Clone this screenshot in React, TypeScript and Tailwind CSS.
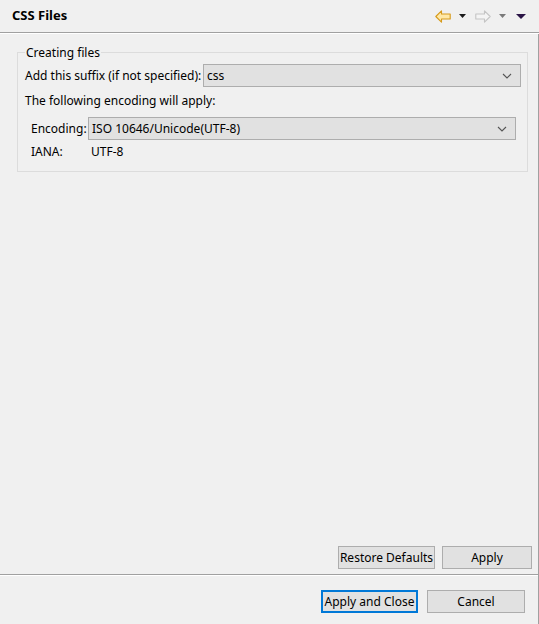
import React from "react";

const font = { fontFamily: '"Noto Sans", "Segoe UI", sans-serif' };

function Chevron() {
  return (
    <svg width="10" height="6" viewBox="0 0 10 6" className="shrink-0">
      <path d="M1 1 L5 5 L9 1" fill="none" stroke="#555" strokeWidth="1.1" />
    </svg>
  );
}

function Combo({ value, className }: { value: string; className: string }) {
  return (
    <div
      className={`flex h-[23px] items-center justify-between border border-[#adadad] bg-[#e1e1e1] pl-[3px] pr-[8px] ${className}`}
    >
      <span>{value}</span>
      <Chevron />
    </div>
  );
}

function Btn({ label, className }: { label: string; className: string }) {
  return (
    <button
      className={`flex h-[23px] items-center justify-center border border-[#adadad] bg-[#e1e1e1] text-[12px] text-black ${className}`}
    >
      {label}
    </button>
  );
}

function Tri({ color }: { color: string }) {
  return (
    <svg width="7" height="4" viewBox="0 0 7 4">
      <path d="M0 0 H7 L3.5 4 Z" fill={color} />
    </svg>
  );
}

function Arrow({ dir, stroke, fill }: { dir: "left" | "right"; stroke: string; fill: string }) {
  return (
    <svg width="16" height="13" viewBox="0 0 16 13" style={dir === "right" ? { transform: "scaleX(-1)" } : undefined}>
      <path
        d="M0.8 6.5 L6.5 0.8 V4 H15.2 V9 H6.5 V12.2 Z"
        fill={fill}
        stroke={stroke}
        strokeWidth="1.1"
        strokeLinejoin="round"
      />
    </svg>
  );
}

export default function App() {
  return (
    <div className="flex h-[624px] w-[539px] flex-col bg-[#f0f0f0] text-[12px] text-black" style={font}>
      {/* title bar */}
      <div className="flex h-[32px] shrink-0 items-center justify-between pl-[12px] pr-[13px]">
        <span className="text-[13px] font-bold">CSS Files</span>
        <div className="flex items-center">
          <Arrow dir="left" stroke="#d69a1c" fill="#ffe8a6" />
          <span className="ml-[8px] flex"><Tri color="#1a1a1a" /></span>
          <span className="ml-[9px] flex"><Arrow dir="right" stroke="#c4c4c4" fill="#f4f4f4" /></span>
          <span className="ml-[8px] flex"><Tri color="#7a7a7a" /></span>
          <span className="ml-[10px] flex">
            <svg width="10" height="5" viewBox="0 0 10 5">
              <path d="M0 0 H10 L5 5 Z" fill="#2a1446" />
            </svg>
          </span>
        </div>
      </div>
      <div className="h-px shrink-0 bg-[#a0a0a0]" />
      <div className="h-px shrink-0 bg-white" />

      <div className="flex flex-1 flex-col border-r border-[#a0a0a0]">
        {/* content */}
        <div className="flex-1 pl-[17px] pr-[12px] pt-[10px]">
          <fieldset className="border border-[#dcdcdc] pb-[10px] pl-[7px] pr-[6px]">
            <legend className="px-[1px] leading-[17px]">Creating files</legend>
            <div className="mt-[3px] flex items-center">
              <span className="w-[178px] shrink-0">Add this suffix (if not specified):</span>
              <Combo value="css" className="w-[318px]" />
            </div>
            <div className="mt-[5px] leading-[18px]">The following encoding will apply:</div>
            <div className="mt-[7px] flex items-center pl-[6px]">
              <span className="w-[57px] shrink-0">Encoding:</span>
              <Combo value="ISO 10646/Unicode(UTF-8)" className="w-[428px]" />
            </div>
            <div className="mt-[3px] flex items-center pl-[6px] leading-[18px]">
              <span className="w-[60px] shrink-0">IANA:</span>
              <span>UTF-8</span>
            </div>
          </fieldset>
        </div>

        <div className="flex shrink-0 justify-end gap-[7px] pb-[5px] pr-[6px]">
          <Btn label="Restore Defaults" className="w-[97px]" />
          <Btn label="Apply" className="w-[90px]" />
        </div>
        <div className="h-px shrink-0 bg-[#a0a0a0]" />
        <div className="h-px shrink-0 bg-white" />
        <div className="flex h-[48px] shrink-0 items-start justify-end gap-[9px] pr-[13px] pt-[14px]">
          <button className="flex h-[23px] w-[97px] items-center justify-center border-2 border-[#0078d7] bg-[#e1e1e1] text-[12px]">
            Apply and Close
          </button>
          <Btn label="Cancel" className="w-[98px]" />
        </div>
      </div>
    </div>
  );
}
